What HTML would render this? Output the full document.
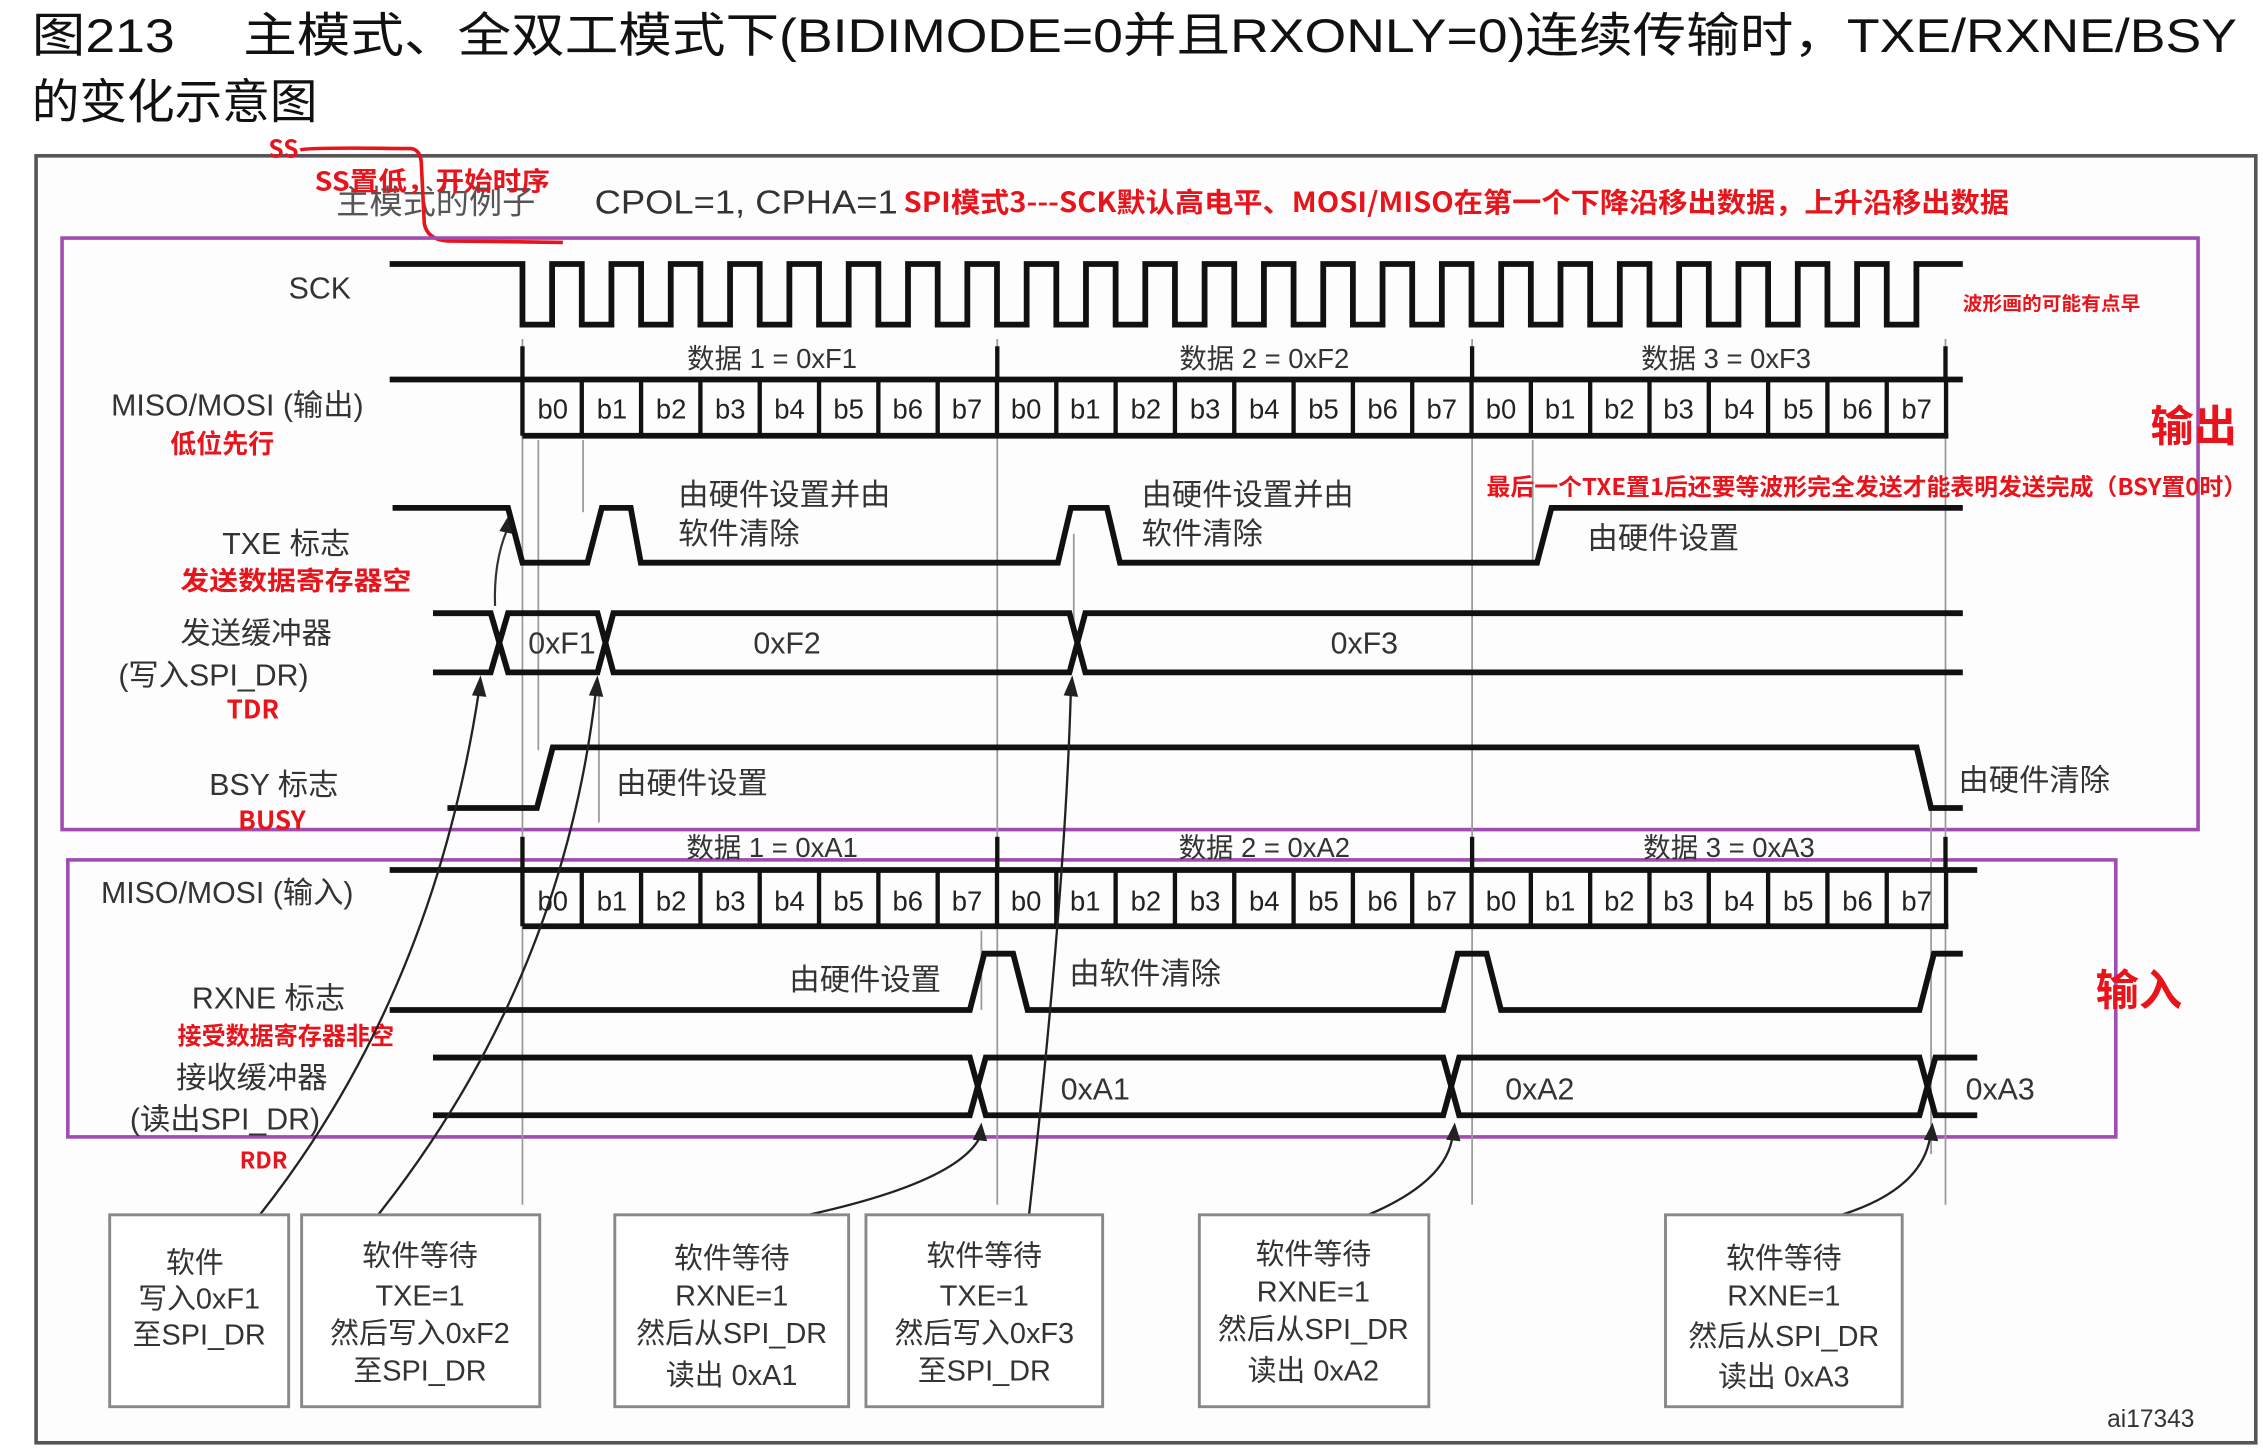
<!DOCTYPE html>
<html><head><meta charset="utf-8"><style>
html,body{margin:0;padding:0;background:#fff;}
svg{display:block}
text{font-family:"Liberation Sans","Noto Sans CJK SC",sans-serif;}
.g{fill:#333;font-size:21px}
.r{fill:#e8141c;font-weight:bold;font-family:"Noto Sans CJK SC","Liberation Sans",sans-serif}
.b{font-size:19px;fill:#222;text-anchor:middle}
.w{fill:none;stroke:#111;stroke-width:4}
.t{fill:none;stroke:#999;stroke-width:1.2}
.bx{fill:#fff;stroke:#888;stroke-width:2}
.bt{font-size:20px;fill:#333;text-anchor:middle}
</style></head><body>
<svg width="2263" height="1450" viewBox="0 0 1568 1005" preserveAspectRatio="none" xmlns="http://www.w3.org/2000/svg">
<text x="22" y="36" font-size="33" fill="#111" textLength="1528" lengthAdjust="spacingAndGlyphs">图213　 主模式、全双工模式下(BIDIMODE=0并且RXONLY=0)连续传输时，TXE/RXNE/BSY</text>
<text x="22" y="82" font-size="33" fill="#111">的变化示意图</text>
<rect x="25" y="108" width="1538" height="892" fill="#fdfdfd" stroke="#555" stroke-width="2.5"/>
<text x="233" y="148" font-size="23" fill="#555">主模式的例子</text>
<text x="412" y="148" font-size="23" fill="#333" textLength="210" lengthAdjust="spacingAndGlyphs">CPOL=1, CPHA=1</text>
<text class="r" x="626" y="147" font-size="19" textLength="766" lengthAdjust="spacingAndGlyphs">SPI模式3---SCK默认高电平、MOSI/MISO在第一个下降沿移出数据，上升沿移出数据</text>
<text class="r" x="186" y="109" font-size="17">SS</text>
<path d="M208 104 Q212 102 285 103 Q292 104 292 115 L294 155 Q296 166 310 167 L390 168" fill="none" stroke="#e8141c" stroke-width="2.5"/>
<text class="r" x="218" y="132" font-size="18" textLength="163" lengthAdjust="spacingAndGlyphs">SS置低，开始时序</text>
<rect x="43" y="165" width="1480" height="410" fill="none" stroke="#a04db0" stroke-width="2.5"/>
<rect x="47" y="596" width="1419" height="192" fill="none" stroke="#a04db0" stroke-width="2.5"/>
<g class="t">
<line x1="362" y1="235" x2="362" y2="835"/><line x1="691" y1="235" x2="691" y2="835"/><line x1="1020" y1="235" x2="1020" y2="835"/><line x1="1348" y1="235" x2="1348" y2="835"/>
<line x1="373" y1="305" x2="373" y2="520"/><line x1="404" y1="305" x2="404" y2="355"/><line x1="415" y1="480" x2="415" y2="570"/><line x1="744" y1="370" x2="744" y2="440"/><line x1="1062" y1="305" x2="1062" y2="390"/><line x1="1338" y1="560" x2="1338" y2="800"/>
<line x1="680" y1="645" x2="680" y2="700"/>
</g>
<text class="g" x="200" y="207" font-size="24">SCK</text>
<path class="w" stroke-width="3.5" d="M270 183 H362 V225 H382.55 V183 H403.1 V225 H423.65 V183 H444.2 V225 H464.75 V183 H485.3 V225 H505.85 V183 H526.4 V225 H546.95 V183 H567.5 V225 H588.05 V183 H608.6 V225 H629.15 V183 H649.7 V225 H670.25 V183 H690.8 V225 H711.35 V183 H731.9 V225 H752.45 V183 H773 V225 H793.55 V183 H814.1 V225 H834.65 V183 H855.2 V225 H875.75 V183 H896.3 V225 H916.85 V183 H937.4 V225 H957.95 V183 H978.5 V225 H999.05 V183 H1019.6 V225 H1040.15 V183 H1060.7 V225 H1081.25 V183 H1101.8 V225 H1122.35 V183 H1142.9 V225 H1163.45 V183 H1184 V225 H1204.55 V183 H1225.1 V225 H1245.65 V183 H1266.2 V225 H1286.75 V183 H1307.3 V225 H1327.85 V183 H1360"/>
<text class="r" x="1360" y="215" font-size="13" textLength="123" lengthAdjust="spacingAndGlyphs">波形画的可能有点早</text>
<g fill="#333" font-size="19" text-anchor="middle"><text x="535" y="255">数据 1 = 0xF1</text><text x="876" y="255">数据 2 = 0xF2</text><text x="1196" y="255">数据 3 = 0xF3</text></g>
<g stroke="#111" stroke-width="3"><line x1="362" y1="240" x2="362" y2="263"/><line x1="691" y1="240" x2="691" y2="263"/><line x1="1020" y1="240" x2="1020" y2="263"/><line x1="1348" y1="240" x2="1348" y2="263"/></g>
<line x1="270" y1="263" x2="1360" y2="263" stroke="#111" stroke-width="4"/>
<line x1="362" y1="302" x2="1350" y2="302" stroke="#111" stroke-width="4"/>
<g stroke="#111" stroke-width="3">
<line x1="362" y1="263" x2="362" y2="302"/><line x1="403.1" y1="263" x2="403.1" y2="302"/><line x1="444.2" y1="263" x2="444.2" y2="302"/><line x1="485.3" y1="263" x2="485.3" y2="302"/><line x1="526.4" y1="263" x2="526.4" y2="302"/><line x1="567.5" y1="263" x2="567.5" y2="302"/><line x1="608.6" y1="263" x2="608.6" y2="302"/><line x1="649.7" y1="263" x2="649.7" y2="302"/><line x1="690.8" y1="263" x2="690.8" y2="302"/><line x1="731.9" y1="263" x2="731.9" y2="302"/><line x1="773" y1="263" x2="773" y2="302"/><line x1="814.1" y1="263" x2="814.1" y2="302"/><line x1="855.2" y1="263" x2="855.2" y2="302"/><line x1="896.3" y1="263" x2="896.3" y2="302"/><line x1="937.4" y1="263" x2="937.4" y2="302"/><line x1="978.5" y1="263" x2="978.5" y2="302"/><line x1="1019.6" y1="263" x2="1019.6" y2="302"/><line x1="1060.7" y1="263" x2="1060.7" y2="302"/><line x1="1101.8" y1="263" x2="1101.8" y2="302"/><line x1="1142.9" y1="263" x2="1142.9" y2="302"/><line x1="1184" y1="263" x2="1184" y2="302"/><line x1="1225.1" y1="263" x2="1225.1" y2="302"/><line x1="1266.2" y1="263" x2="1266.2" y2="302"/><line x1="1307.3" y1="263" x2="1307.3" y2="302"/><line x1="1348.4" y1="263" x2="1348.4" y2="302"/>
</g>
<g class="b">
<text x="383" y="290">b0</text><text x="424" y="290">b1</text><text x="465" y="290">b2</text><text x="506" y="290">b3</text><text x="547" y="290">b4</text><text x="588" y="290">b5</text><text x="629" y="290">b6</text><text x="670" y="290">b7</text><text x="711" y="290">b0</text><text x="752" y="290">b1</text><text x="794" y="290">b2</text><text x="835" y="290">b3</text><text x="876" y="290">b4</text><text x="917" y="290">b5</text><text x="958" y="290">b6</text><text x="999" y="290">b7</text><text x="1040" y="290">b0</text><text x="1081" y="290">b1</text><text x="1122" y="290">b2</text><text x="1163" y="290">b3</text><text x="1205" y="290">b4</text><text x="1246" y="290">b5</text><text x="1287" y="290">b6</text><text x="1328" y="290">b7</text>
</g>
<text class="g" x="77" y="288" font-size="22">MISO/MOSI (输出)</text>
<text class="r" x="118" y="314" font-size="18">低位先行</text>
<text class="r" x="1490" y="306" font-size="30">输出</text>
<text class="r" x="1030" y="343" font-size="16" textLength="527" lengthAdjust="spacingAndGlyphs">最后一个TXE置1后还要等波形完全发送才能表明发送完成（BSY置0时）</text>
<path class="w" d="M272 352 H352 L362 390 H407 L417 352 H437 L444 390 H733 L742 352 H767 L776 390 H1065 L1075 352 H1360" stroke-width="3.5"/>
<g class="g" font-size="21"><text x="470" y="350">由硬件设置并由</text><text x="470" y="377">软件清除</text><text x="791" y="350">由硬件设置并由</text><text x="791" y="377">软件清除</text><text x="1100" y="380">由硬件设置</text></g>
<text class="g" x="154" y="384" font-size="22">TXE 标志</text>
<text class="r" x="125" y="409" font-size="18" textLength="160" lengthAdjust="spacingAndGlyphs">发送数据寄存器空</text>
<path d="M343 420 Q342 390 351 368" fill="none" stroke="#333" stroke-width="1.5"/><path d="M346 368 L352 358 L355 370 Z" fill="#222"/>
<path class="w" d="M300 425 H340 L352 466 H414 L425 425 H741 L752 466 H1360" stroke-width="3.5"/>
<path class="w" d="M300 466 H340 L352 425 H414 L425 466 H741 L752 425 H1360" stroke-width="3.5"/>
<g class="g" font-size="20"><text x="366" y="453">0xF1</text><text x="522" y="453">0xF2</text><text x="922" y="453">0xF3</text></g>
<text class="g" x="125" y="446" font-size="22">发送缓冲器</text>
<text class="g" x="82" y="475" font-size="22">(写入SPI_DR)</text>
<text class="r" x="157" y="498" font-size="18">TDR</text>
<path class="w" d="M310 560 H372 L383 518 H1328 L1338 560 H1360" stroke-width="3.5"/>
<text class="g" x="427" y="550" font-size="21">由硬件设置</text>
<text class="g" x="1357" y="548" font-size="21">由硬件清除</text>
<text class="g" x="145" y="551" font-size="22">BSY 标志</text>
<text class="r" x="165" y="575" font-size="18">BUSY</text>
<g fill="#333" font-size="19" text-anchor="middle"><text x="535" y="594">数据 1 = 0xA1</text><text x="876" y="594">数据 2 = 0xA2</text><text x="1198" y="594">数据 3 = 0xA3</text></g>
<g stroke="#111" stroke-width="3"><line x1="362" y1="580" x2="362" y2="603"/><line x1="691" y1="580" x2="691" y2="603"/><line x1="1020" y1="580" x2="1020" y2="603"/><line x1="1348" y1="580" x2="1348" y2="603"/></g>
<line x1="270" y1="603" x2="1370" y2="603" stroke="#111" stroke-width="4"/>
<line x1="362" y1="642" x2="1350" y2="642" stroke="#111" stroke-width="4"/>
<g stroke="#111" stroke-width="3">
<line x1="362" y1="603" x2="362" y2="642"/><line x1="403.1" y1="603" x2="403.1" y2="642"/><line x1="444.2" y1="603" x2="444.2" y2="642"/><line x1="485.3" y1="603" x2="485.3" y2="642"/><line x1="526.4" y1="603" x2="526.4" y2="642"/><line x1="567.5" y1="603" x2="567.5" y2="642"/><line x1="608.6" y1="603" x2="608.6" y2="642"/><line x1="649.7" y1="603" x2="649.7" y2="642"/><line x1="690.8" y1="603" x2="690.8" y2="642"/><line x1="731.9" y1="603" x2="731.9" y2="642"/><line x1="773" y1="603" x2="773" y2="642"/><line x1="814.1" y1="603" x2="814.1" y2="642"/><line x1="855.2" y1="603" x2="855.2" y2="642"/><line x1="896.3" y1="603" x2="896.3" y2="642"/><line x1="937.4" y1="603" x2="937.4" y2="642"/><line x1="978.5" y1="603" x2="978.5" y2="642"/><line x1="1019.6" y1="603" x2="1019.6" y2="642"/><line x1="1060.7" y1="603" x2="1060.7" y2="642"/><line x1="1101.8" y1="603" x2="1101.8" y2="642"/><line x1="1142.9" y1="603" x2="1142.9" y2="642"/><line x1="1184" y1="603" x2="1184" y2="642"/><line x1="1225.1" y1="603" x2="1225.1" y2="642"/><line x1="1266.2" y1="603" x2="1266.2" y2="642"/><line x1="1307.3" y1="603" x2="1307.3" y2="642"/><line x1="1348.4" y1="603" x2="1348.4" y2="642"/>
</g>
<g class="b">
<text x="383" y="631">b0</text><text x="424" y="631">b1</text><text x="465" y="631">b2</text><text x="506" y="631">b3</text><text x="547" y="631">b4</text><text x="588" y="631">b5</text><text x="629" y="631">b6</text><text x="670" y="631">b7</text><text x="711" y="631">b0</text><text x="752" y="631">b1</text><text x="794" y="631">b2</text><text x="835" y="631">b3</text><text x="876" y="631">b4</text><text x="917" y="631">b5</text><text x="958" y="631">b6</text><text x="999" y="631">b7</text><text x="1040" y="631">b0</text><text x="1081" y="631">b1</text><text x="1122" y="631">b2</text><text x="1163" y="631">b3</text><text x="1205" y="631">b4</text><text x="1246" y="631">b5</text><text x="1287" y="631">b6</text><text x="1328" y="631">b7</text>
</g>
<text class="g" x="70" y="626" font-size="22">MISO/MOSI (输入)</text>
<text class="r" x="1452" y="697" font-size="30">输入</text>
<path class="w" d="M270 700 H672 L682 661 H702 L712 700 H1000 L1010 661 H1030 L1040 700 H1330 L1340 661 H1360" stroke-width="3.5"/>
<text class="g" x="547" y="686" font-size="21">由硬件设置</text>
<text class="g" x="741" y="682" font-size="21">由软件清除</text>
<text class="g" x="133" y="699" font-size="22">RXNE 标志</text>
<text class="r" x="123" y="724" font-size="17" textLength="150" lengthAdjust="spacingAndGlyphs">接受数据寄存器非空</text>
<path class="w" d="M300 733 H672 L683 773 H1000 L1011 733 H1330 L1341 773 H1370" stroke-width="3.5"/>
<path class="w" d="M300 773 H672 L683 733 H1000 L1011 773 H1330 L1341 733 H1370" stroke-width="3.5"/>
<g class="g" font-size="20"><text x="735" y="762">0xA1</text><text x="1043" y="762">0xA2</text><text x="1362" y="762">0xA3</text></g>
<text class="g" x="122" y="754" font-size="22">接收缓冲器</text>
<text class="g" x="90" y="783" font-size="22">(读出SPI_DR)</text>
<text class="r" x="166" y="810" font-size="16">RDR</text>
<g fill="none" stroke="#222" stroke-width="1.6">
<path d="M180 842 Q300 690 332 478"/>
<path d="M262 842 Q390 680 413 478"/>
<path d="M560 842 Q660 820 678 790"/>
<path d="M713 842 Q738 620 742 478"/>
<path d="M948 842 Q1000 820 1006 790"/>
<path d="M1276 842 Q1330 825 1337 790"/>
</g>
<g fill="#222">
<path d="M327 482 L333 468 L337 483 Z"/><path d="M408 482 L414 468 L418 483 Z"/><path d="M737 482 L743 468 L747 483 Z"/>
<path d="M674 790 L680 778 L684 791 Z"/><path d="M1002 790 L1008 778 L1012 791 Z"/><path d="M1333 790 L1339 778 L1343 791 Z"/>
</g>
<rect class="bx" x="76" y="842" width="124" height="133"/>
<rect class="bx" x="209" y="842" width="165" height="133"/>
<rect class="bx" x="426" y="842" width="162" height="133"/>
<rect class="bx" x="600" y="842" width="164" height="133"/>
<rect class="bx" x="831" y="842" width="159" height="133"/>
<rect class="bx" x="1154" y="842" width="164" height="133"/>
<g class="bt">
<text x="135" y="882">软件</text><text x="138" y="907">写入0xF1</text><text x="138" y="932">至SPI_DR</text>
<text x="291" y="877">软件等待</text><text x="291" y="905">TXE=1</text><text x="291" y="931">然后写入0xF2</text><text x="291" y="957">至SPI_DR</text>
<text x="507" y="879">软件等待</text><text x="507" y="905">RXNE=1</text><text x="507" y="931">然后从SPI_DR</text><text x="507" y="960">读出 0xA1</text>
<text x="682" y="877">软件等待</text><text x="682" y="905">TXE=1</text><text x="682" y="931">然后写入0xF3</text><text x="682" y="957">至SPI_DR</text>
<text x="910" y="876">软件等待</text><text x="910" y="902">RXNE=1</text><text x="910" y="928">然后从SPI_DR</text><text x="910" y="957">读出 0xA2</text>
<text x="1236" y="879">软件等待</text><text x="1236" y="905">RXNE=1</text><text x="1236" y="933">然后从SPI_DR</text><text x="1236" y="961">读出 0xA3</text>
</g>
<text x="1460" y="989" font-size="17" fill="#333">ai17343</text>
</svg>
</body></html>
